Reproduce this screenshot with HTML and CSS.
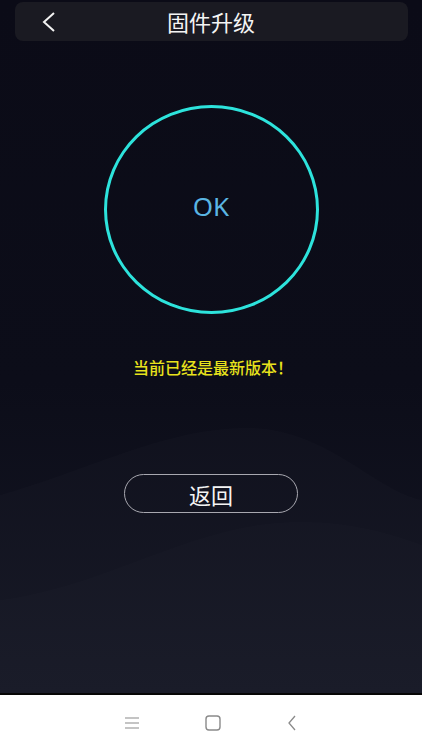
FILE: index.html
```html
<!DOCTYPE html>
<html>
    <head>
        <meta charset="utf-8">
        <link rel="stylesheet" href="styles.css">
    </head>
    <body>
        <div class="screen">
            <!-- soft waves behind the content -->
            <svg class="waves" width="422" height="695" viewBox="0 0 422 695">
                <path d="M0 495 C 90 470, 170 425, 255 428 C 330 432, 375 490, 422 500 L422 695 L0 695 Z" fill="rgba(255,255,255,0.014)" />
                <path d="M0 600 C 110 585, 190 525, 290 522 C 350 520, 395 535, 422 545 L422 695 L0 695 Z" fill="rgba(255,255,255,0.01)" />
            </svg>

            <div class="header">
                <div class="back">
                    <svg width="18" height="22" viewBox="0 0 18 22">
                        <path d="M15 2 L5 11 L15 20" fill="none" stroke="#f2f2f2" stroke-width="2" />
                    </svg>
                </div>
                <div class="title">固件升级</div>
                <div></div>
            </div>

            <div class="ring">OK</div>
            <div class="status">当前已经是最新版本！</div>
            <div class="btn">返回</div>
        </div>

        <div class="navbar">
            <svg width="14" height="12" viewBox="0 0 14 12">
                <path d="M0 1 H14 M0 6 H14 M0 11 H14" stroke="#8a8a8a" stroke-width="1.2" />
            </svg>
            <svg width="16" height="16" viewBox="0 0 16 16">
                <rect x="1" y="1" width="14" height="14" rx="3" fill="none" stroke="#8a8a8a" stroke-width="1.4" />
            </svg>
            <svg width="10" height="16" viewBox="0 0 10 16">
                <path d="M8 1 L2 8 L8 15" fill="none" stroke="#8a8a8a" stroke-width="1.3" />
            </svg>
        </div>
    </body>
</html>
```
FILE: styles.css
```css
*{ padding: 0px; margin: 0px; box-sizing: border-box; }

html, body
{
    width: 422px;
    height: 750px;
    overflow: hidden;
    background: #ffffff;
    font-family: "Noto Sans CJK SC", "Noto Sans", sans-serif;
}

.screen
{
    position: relative;
    height: 695px;
    display: flex;
    flex-direction: column;
    align-items: center;
    background: linear-gradient(#0b0b17 0%, #0c0d19 55%, #151724 100%);
    border-bottom: 2px solid #000;
}

.waves
{
    position: absolute;
    top: 0;
    left: 0;
}

.header
{
    position: relative;
    margin-top: 2px;
    width: 393px;
    height: 39px;
    border-radius: 8px;
    background: #1a1a22;
    display: grid;
    grid-template-columns: 1fr auto 1fr;
    align-items: center;
}

.back
{
    padding-left: 24px;
    display: flex;
    align-items: center;
}

.title
{
    color: #f4f4f4;
    font-size: 22px;
    line-height: 39px;
}

.ring
{
    position: relative;
    margin-top: 64px;
    width: 215px;
    height: 209px;
    border-radius: 50%;
    border: 3px solid #2de3dc;
    display: flex;
    align-items: center;
    justify-content: center;
    padding-bottom: 8px;
    color: #5ab5e3;
    font-family: "Noto Sans", sans-serif;
    font-size: 26px;
}

.status
{
    position: relative;
    margin-top: 43px;
    padding-left: 4px;
    color: #e8e21c;
    font-size: 16px;
    font-weight: 500;
    line-height: 20px;
}

.btn
{
    position: relative;
    margin-top: 97px;
    width: 174px;
    height: 39px;
    border: 1px solid #a8a8b0;
    border-radius: 20px;
    display: flex;
    align-items: center;
    justify-content: center;
    color: #f4f4f4;
    font-size: 22px;
}

.navbar
{
    height: 55px;
    display: flex;
    align-items: center;
    justify-content: center;
    gap: 66px;
    background: #ffffff;
}
```
